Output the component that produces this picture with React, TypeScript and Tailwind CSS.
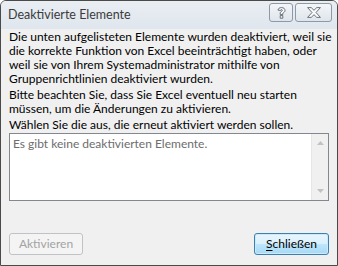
export default function App() {
  return (
    <div className="w-[338px] h-[266px] flex flex-col border border-[#4a4a4a] rounded-t-[6px] bg-[#f0f0f0] overflow-hidden font-['Lato',sans-serif] text-[12px] text-black">
      {/* title bar */}
      <div className="h-[28px] flex items-start justify-between bg-[linear-gradient(#e9eef3,#dfe6ed)] pl-[7px] pr-[5px]">
        <div className="pt-[5px] text-[12.5px] text-[#3b3b3b] leading-[18px]">Deaktivierte Elemente</div>
        <div className="flex gap-[2px] pt-[2px]">
          <div className="w-[24px] h-[19px] rounded-[3px] border border-[#8d99a6] bg-[linear-gradient(#f3f6f9,#dfe5eb)] flex items-center justify-center">
            <svg width="9" height="12" viewBox="0 0 9 12">
              <path
                d="M1 3.2 C1 1.4 2.6 0.6 4.5 0.6 C6.6 0.6 8 1.6 8 3.4 C8 5 6.6 5.6 5.8 6.2 L5.8 7.6 L3.2 7.6 L3.2 5.8 C3.2 4.8 5.3 4.4 5.3 3.4 C5.3 2.8 4.9 2.6 4.5 2.6 C4 2.6 3.7 2.9 3.7 3.4 Z M3.2 8.6 L5.8 8.6 L5.8 11.2 L3.2 11.2 Z"
                fill="#fafafa"
                stroke="#5a6470"
                strokeWidth="0.9"
              />
            </svg>
          </div>
          <div className="w-[37px] h-[19px] rounded-[3px] border border-[#8d99a6] bg-[linear-gradient(#f3f6f9,#dfe5eb)] flex items-center justify-center">
            <svg width="14" height="11" viewBox="0 0 14 11">
              <path
                d="M0.6 0.6 L4.2 0.6 L7 3.3 L9.8 0.6 L13.4 0.6 L9 5.5 L13.4 10.4 L9.8 10.4 L7 7.7 L4.2 10.4 L0.6 10.4 L5 5.5 Z"
                fill="#fafafa"
                stroke="#5a6470"
                strokeWidth="0.9"
              />
            </svg>
          </div>
        </div>
      </div>

      {/* body */}
      <div className="flex-1 flex flex-col px-[8px] pt-[1px] leading-[14px] whitespace-nowrap">
        <p>
          Die unten aufgelisteten Elemente wurden deaktiviert, weil sie
          <br />
          die korrekte Funktion von Excel beeinträchtigt haben, oder
          <br />
          weil sie von Ihrem Systemadministrator mithilfe von
          <br />
          Gruppenrichtlinien deaktiviert wurden.
        </p>
        <p className="mt-[2px]">
          Bitte beachten Sie, dass Sie Excel eventuell neu starten
          <br />
          müssen, um die Änderungen zu aktivieren.
        </p>
        <p className="mt-[2px]">Wählen Sie die aus, die erneut aktiviert werden sollen.</p>

        <div className="mt-[1px] h-[68px] border border-[#828790] bg-white flex">
          <div className="flex-1 px-[3px] pt-[3px] text-[#6d6d6d]">Es gibt keine deaktivierten Elemente.</div>
          <div className="w-[17px] bg-[#f0f0f0] border-l border-[#e6e6e6] flex flex-col items-center justify-between py-[7px]">
            <svg width="7" height="4" viewBox="0 0 7 4">
              <path d="M0 4 L3.5 0 L7 4 Z" fill="#c2c2c2" />
            </svg>
            <svg width="7" height="4" viewBox="0 0 7 4">
              <path d="M0 0 L7 0 L3.5 4 Z" fill="#c2c2c2" />
            </svg>
          </div>
        </div>

        <div className="mt-[32px] flex justify-between">
          <div className="w-[74px] h-[22px] rounded-[3px] border border-[#bfc3c6] bg-[#f4f4f4] flex items-center justify-center text-[#a3a3a3]">
            Aktivieren
          </div>
          <div className="w-[75px] h-[22px] rounded-[3px] border border-[#3c7fb1] bg-[linear-gradient(#eaf6fd_0%,#d9f0fc_50%,#bee6fd_51%,#a7d9f5_100%)] shadow-[inset_0_0_0_1px_#cdeaf9] flex items-center justify-center">
            <span>
              <span className="underline underline-offset-[2px]">S</span>chließen
            </span>
          </div>
        </div>
      </div>
    </div>
  );
}
